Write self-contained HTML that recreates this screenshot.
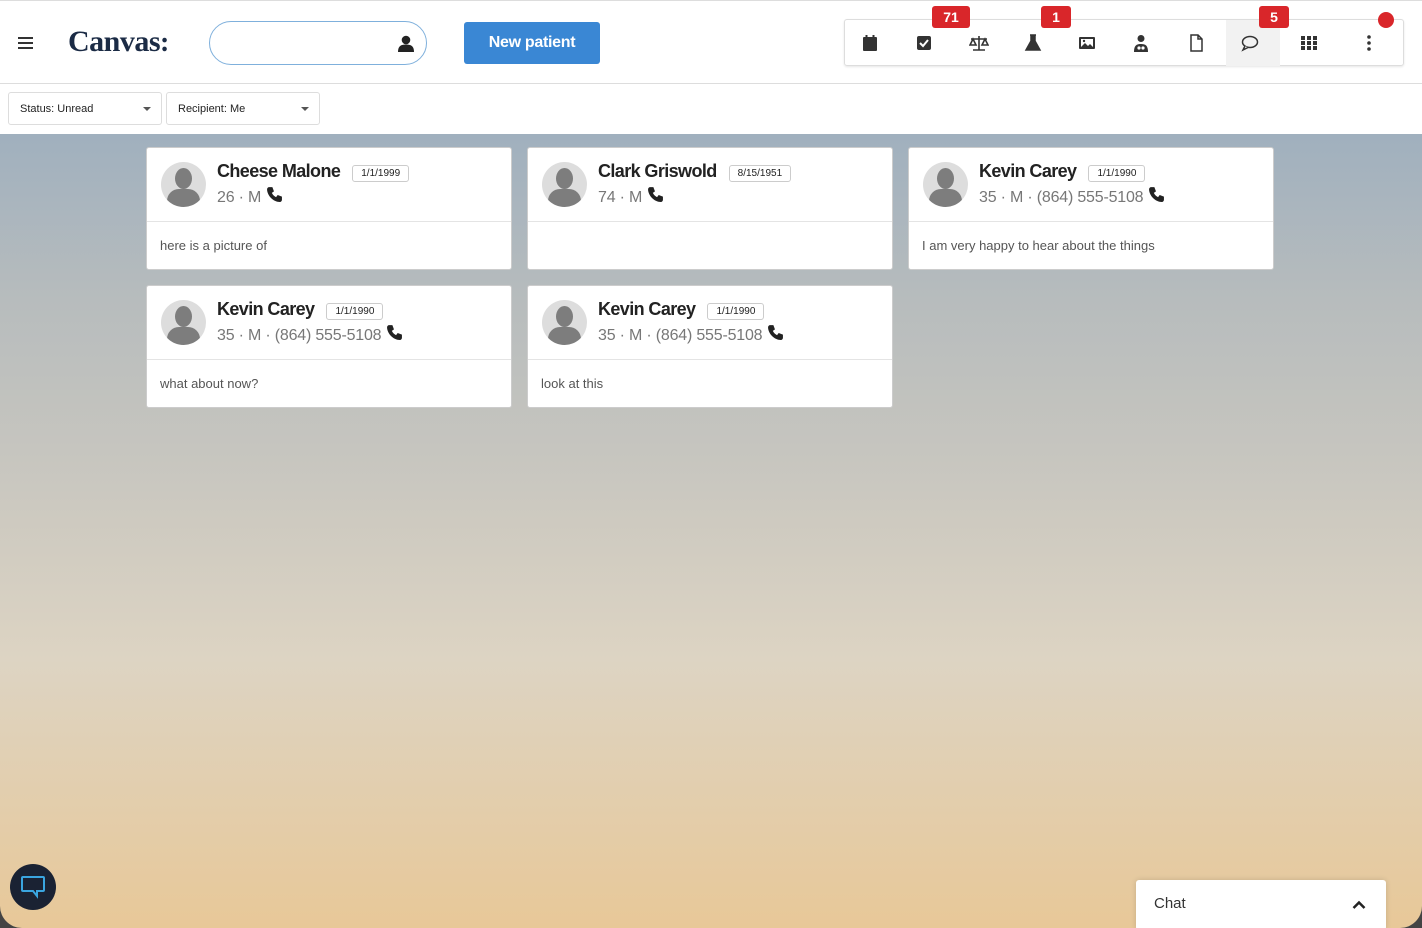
<!DOCTYPE html>
<html><head><style>
*{box-sizing:border-box;margin:0;padding:0}
body{width:1422px;height:928px;overflow:hidden;font-family:"Liberation Sans",sans-serif;background:#444;position:relative}
.win{position:absolute;left:0;top:0;width:1422px;height:928px;border-radius:0 0 22px 22px;overflow:hidden;background:linear-gradient(#a0b0be 134px,#b7bcbd 300px,#c6c5bf 450px,#ddd4c3 660px,#e8c898 928px)}
.top{position:absolute;left:0;top:0;width:1422px;height:134px;background:#fff;border-top:1px solid #ddd}
.hl{position:absolute;top:82px;left:0;width:1422px;height:1px;background:#ddd}
.ham{position:absolute;left:18px;top:36px;width:15px}
.ham i{display:block;height:2px;background:#333;margin-bottom:3px}
.logo{position:absolute;left:68px;top:24px;font-family:"Liberation Serif",serif;font-weight:bold;font-size:30px;color:#1b2b45;letter-spacing:-0.5px}
.search{position:absolute;left:209px;top:20px;width:218px;height:44px;border:1px solid #7fb0dc;border-radius:22px}
.btn{position:absolute;left:464px;top:21px;width:136px;height:42px;background:#3a87d4;border-radius:3px;color:#fff;font-weight:bold;font-size:16px;text-align:center;line-height:42px;letter-spacing:-0.3px}
.bar{position:absolute;left:844px;top:18px;width:560px;height:47px;border:1px solid #ddd;border-radius:3px;box-shadow:0 1px 2px rgba(0,0,0,.1)}
.ic{position:absolute;top:14px;width:18px;height:18px}
.badge{position:absolute;top:5px;height:22px;background:#d9262a;color:#fff;font-weight:bold;font-size:14px;text-align:center;line-height:22px;border-radius:3px}
.flt{position:absolute;top:91px;height:33px;border:1px solid #ddd;border-radius:3px;font-size:11px;color:#222;padding:10px 11px}
.flt:after{content:"";position:absolute;right:10px;top:14px;border:4px solid transparent;border-top-color:#555;border-bottom:0}
.card{position:absolute;width:366px;height:123px;background:#fff;border:1px solid #ccc;border-radius:3px}
.av{position:absolute;left:14px;top:14px;width:45px;height:45px;border-radius:50%;background:#ddd;overflow:hidden}
.av:before{content:"";position:absolute;left:14px;top:6px;width:17px;height:21px;border-radius:50%;background:#7d7d7d}
.av:after{content:"";position:absolute;left:6px;top:27px;width:33px;height:24px;border-radius:12px 12px 0 0;background:#7d7d7d}
.nm{position:absolute;left:70px;top:13px;font-size:18px;font-weight:bold;color:#222;letter-spacing:-.6px;white-space:nowrap}
.dob{display:inline-block;vertical-align:1px;margin-left:12px;border:1px solid #ccc;border-radius:3px;font-size:10px;font-weight:normal;padding:2px 8px;letter-spacing:0}
.sub{position:absolute;left:70px;top:38px;font-size:16px;color:#777;letter-spacing:-.2px}
.ph{display:inline-block;width:17px;height:17px;vertical-align:-1px;margin-left:5px}
.div{position:absolute;left:0;top:73px;width:100%;height:1px;background:#e4e4e4}
.msg{position:absolute;left:13px;top:90px;font-size:13px;color:#555}
.chatb{position:absolute;left:10px;top:864px;width:46px;height:46px;border-radius:50%;background:#1a2233}
.chat{position:absolute;left:1136px;top:880px;width:250px;height:50px;background:#fff;border-radius:3px;box-shadow:0 0 6px rgba(0,0,0,.15);font-size:15px;color:#333;padding:15px 18px}
</style></head><body>
<div class="win">
<div class="top">
<div class="ham"><i></i><i></i><i></i></div>
<div class="logo">Canvas<span style="font-size:28px">:</span></div>
<div class="search"><svg style="position:absolute;right:12px;top:13px" width="16" height="17" viewBox="0 0 16 17"><circle cx="8" cy="5" r="4.3" fill="#222"/><path d="M0 17c0-6 3-7.5 8-7.5s8 1.5 8 7.5z" fill="#222"/></svg></div>
<div class="btn">New patient</div>
<div class="bar">
<div style="position:absolute;left:381px;top:0;width:54px;height:46px;background:#f2f2f2"></div>
<svg class="ic" style="left:16px" viewBox="0 0 18 18"><rect x="2" y="3" width="14" height="14" rx="1" fill="#333"/><rect x="4.5" y="1" width="2" height="4" fill="#333"/><rect x="11.5" y="1" width="2" height="4" fill="#333"/></svg>
<svg class="ic" style="left:70px" viewBox="0 0 18 18"><rect x="2" y="2" width="14" height="14" rx="2" fill="#333"/><path d="M5 9l3 3 5-6" stroke="#fff" stroke-width="2" fill="none"/></svg>
<svg class="ic" style="left:124px;width:20px" viewBox="0 0 20 18"><path d="M10 2v14M4 16h12M2 5h16M4 5l-3 6h6zM16 5l-3 6h6z" stroke="#333" stroke-width="1.6" fill="none"/></svg>
<svg class="ic" style="left:179px" viewBox="0 0 18 18"><path d="M6 1h6M7 1v6l-5 9h14l-5-9V1" fill="#333" stroke="#333" stroke-width="1.5"/></svg>
<svg class="ic" style="left:233px" viewBox="0 0 18 18"><rect x="1" y="3" width="16" height="12" rx="1" fill="#333"/><rect x="3" y="5" width="12" height="8" fill="#fff"/><path d="M3 13l4-4 3 3 2-2 3 3z" fill="#333"/><circle cx="6" cy="7" r="1.2" fill="#333"/></svg>
<svg class="ic" style="left:287px" viewBox="0 0 18 18"><circle cx="9" cy="4.5" r="3.5" fill="#333"/><path d="M2 18c0-7 3-8 7-8s7 1 7 8z" fill="#333"/><circle cx="7" cy="14" r="1.6" fill="#fff"/><circle cx="11" cy="14" r="1.6" fill="#fff"/></svg>
<svg class="ic" style="left:342px" viewBox="0 0 18 18"><path d="M4 1h7l4 4v12H4z M11 1v4h4" stroke="#333" stroke-width="1.5" fill="none"/></svg>
<svg class="ic" style="left:396px" viewBox="0 0 18 18"><ellipse cx="9" cy="8" rx="7.5" ry="5.5" stroke="#333" stroke-width="1.5" fill="none"/><path d="M4 12l-2 4 5-2.5" stroke="#333" stroke-width="1.5" fill="#fff"/></svg>
<svg class="ic" style="left:455px" viewBox="0 0 18 18"><g fill="#333"><rect x="1" y="2" width="4" height="4"/><rect x="7" y="2" width="4" height="4"/><rect x="13" y="2" width="4" height="4"/><rect x="1" y="7" width="4" height="4"/><rect x="7" y="7" width="4" height="4"/><rect x="13" y="7" width="4" height="4"/><rect x="1" y="12" width="4" height="4"/><rect x="7" y="12" width="4" height="4"/><rect x="13" y="12" width="4" height="4"/></g></svg>
<svg class="ic" style="left:515px" viewBox="0 0 18 18"><g fill="#333"><circle cx="9" cy="3" r="1.8"/><circle cx="9" cy="9" r="1.8"/><circle cx="9" cy="15" r="1.8"/></g></svg>
</div>
<div class="badge" style="left:932px;width:38px">71</div>
<div class="badge" style="left:1041px;width:30px">1</div>
<div class="badge" style="left:1259px;width:30px">5</div>
<div style="position:absolute;left:1378px;top:11px;width:16px;height:16px;border-radius:50%;background:#d9262a"></div>
<div class="hl"></div>
<div class="flt" style="left:8px;width:154px">Status: Unread</div>
<div class="flt" style="left:166px;width:154px">Recipient: Me</div>
</div>

<div class="card" style="left:146px;top:147px"><div class="av"></div><div class="nm">Cheese Malone<span class="dob">1/1/1999</span></div><div class="sub">26 · M<svg class="ph" viewBox="0 0 16 16"><path d="M3 1l3 0 1.5 4-2 1.5c1 2 2 3 4 4l1.5-2 4 1.5v3c0 1-1 2-2 2C7 15 1 9 1 3c0-1 1-2 2-2z" fill="#222"/></svg></div><div class="div"></div><div class="msg">here is a picture of</div></div>
<div class="card" style="left:527px;top:147px"><div class="av"></div><div class="nm">Clark Griswold<span class="dob">8/15/1951</span></div><div class="sub">74 · M<svg class="ph" viewBox="0 0 16 16"><path d="M3 1l3 0 1.5 4-2 1.5c1 2 2 3 4 4l1.5-2 4 1.5v3c0 1-1 2-2 2C7 15 1 9 1 3c0-1 1-2 2-2z" fill="#222"/></svg></div><div class="div"></div></div>
<div class="card" style="left:908px;top:147px"><div class="av"></div><div class="nm">Kevin Carey<span class="dob">1/1/1990</span></div><div class="sub">35 · M · (864) 555-5108<svg class="ph" viewBox="0 0 16 16"><path d="M3 1l3 0 1.5 4-2 1.5c1 2 2 3 4 4l1.5-2 4 1.5v3c0 1-1 2-2 2C7 15 1 9 1 3c0-1 1-2 2-2z" fill="#222"/></svg></div><div class="div"></div><div class="msg">I am very happy to hear about the things</div></div>
<div class="card" style="left:146px;top:285px"><div class="av"></div><div class="nm">Kevin Carey<span class="dob">1/1/1990</span></div><div class="sub">35 · M · (864) 555-5108<svg class="ph" viewBox="0 0 16 16"><path d="M3 1l3 0 1.5 4-2 1.5c1 2 2 3 4 4l1.5-2 4 1.5v3c0 1-1 2-2 2C7 15 1 9 1 3c0-1 1-2 2-2z" fill="#222"/></svg></div><div class="div"></div><div class="msg">what about now?</div></div>
<div class="card" style="left:527px;top:285px"><div class="av"></div><div class="nm">Kevin Carey<span class="dob">1/1/1990</span></div><div class="sub">35 · M · (864) 555-5108<svg class="ph" viewBox="0 0 16 16"><path d="M3 1l3 0 1.5 4-2 1.5c1 2 2 3 4 4l1.5-2 4 1.5v3c0 1-1 2-2 2C7 15 1 9 1 3c0-1 1-2 2-2z" fill="#222"/></svg></div><div class="div"></div><div class="msg">look at this</div></div>

<div class="chatb"><svg style="position:absolute;left:10px;top:11px" width="26" height="24" viewBox="0 0 26 24"><path d="M3 2h20a1 1 0 0 1 1 1v12a1 1 0 0 1-1 1h-6v5l-4-5H3a1 1 0 0 1-1-1V3a1 1 0 0 1 1-1z" stroke="#3aa5e0" stroke-width="2" fill="none"/></svg></div>
<div class="chat">Chat<svg style="position:absolute;right:20px;top:20px" width="14" height="10" viewBox="0 0 14 10"><path d="M1.5 8l5.5-5.5 5.5 5.5" stroke="#222" stroke-width="2.5" fill="none"/></svg></div>
</div>
</body></html>
